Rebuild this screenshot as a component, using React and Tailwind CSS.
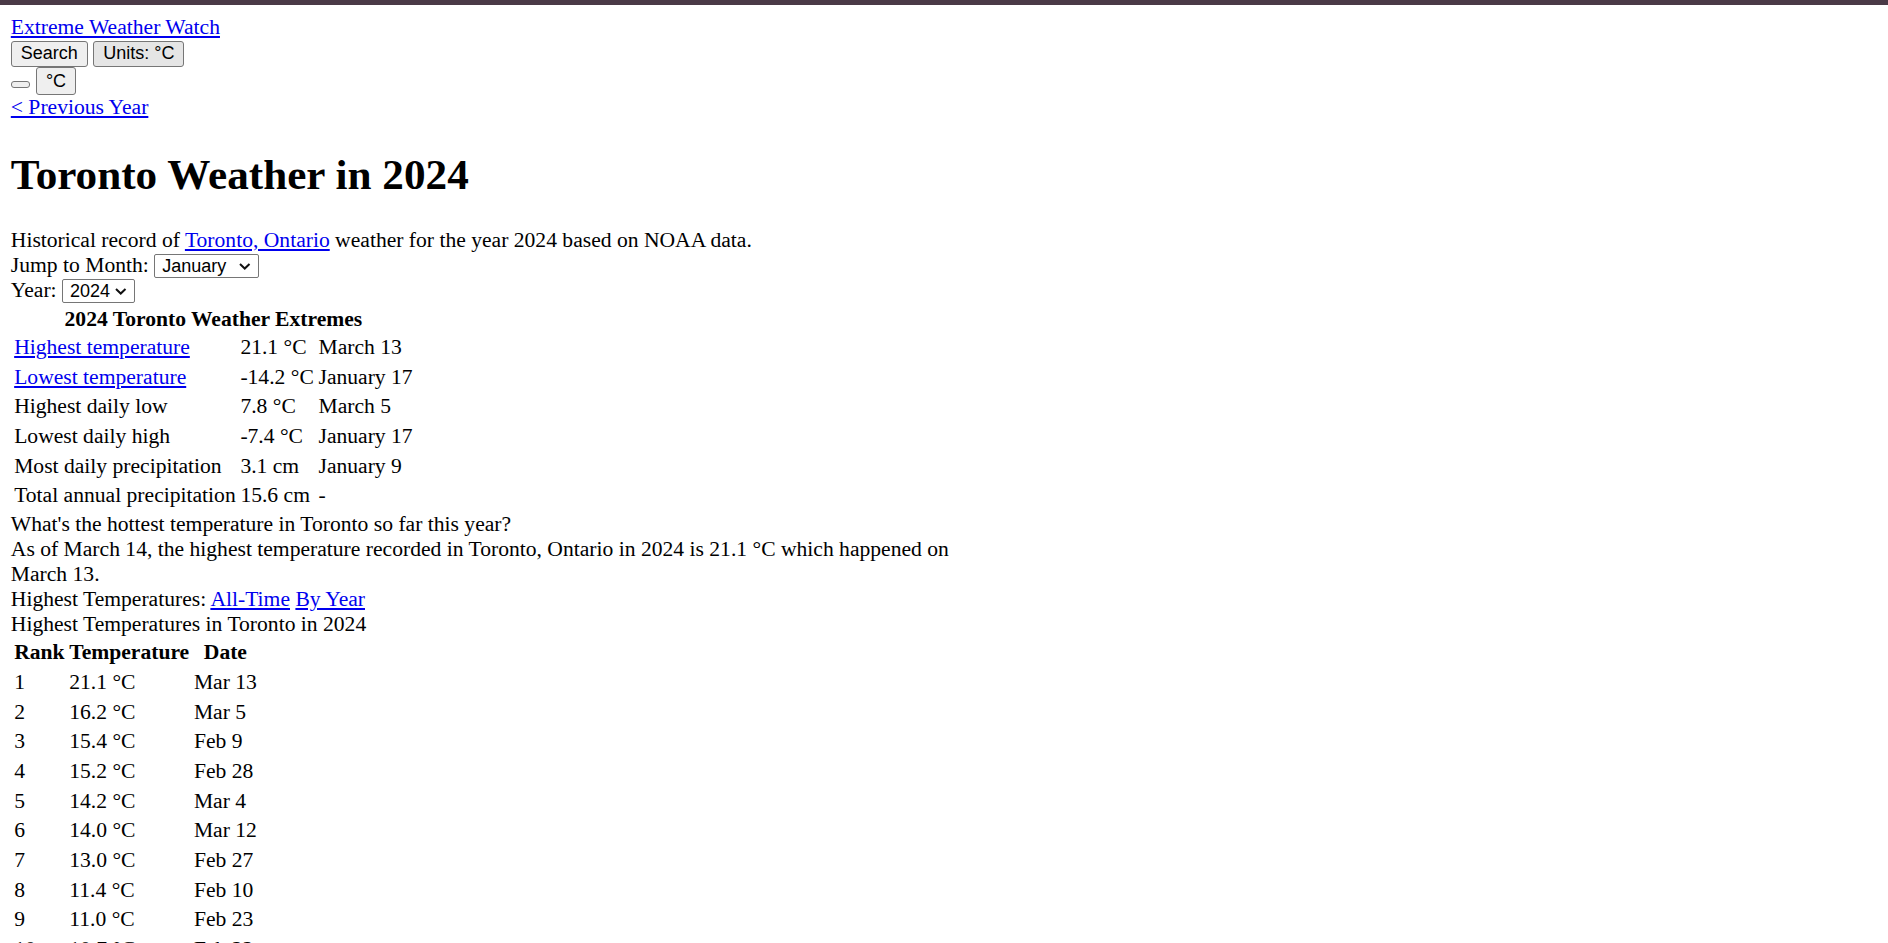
import React from "react";

const extremes = [
  { label: "Highest temperature", link: true, value: "21.1 °C", date: "March 13" },
  { label: "Lowest temperature", link: true, value: "-14.2 °C", date: "January 17" },
  { label: "Highest daily low", value: "7.8 °C", date: "March 5" },
  { label: "Lowest daily high", value: "-7.4 °C", date: "January 17" },
  { label: "Most daily precipitation", value: "3.1 cm", date: "January 9" },
  { label: "Total annual precipitation", value: "15.6 cm", date: "-" },
];

const highs = [
  ["1", "21.1 °C", "Mar 13"],
  ["2", "16.2 °C", "Mar 5"],
  ["3", "15.4 °C", "Feb 9"],
  ["4", "15.2 °C", "Feb 28"],
  ["5", "14.2 °C", "Mar 4"],
  ["6", "14.0 °C", "Mar 12"],
  ["7", "13.0 °C", "Feb 27"],
  ["8", "11.4 °C", "Feb 10"],
  ["9", "11.0 °C", "Feb 23"],
  ["10", "10.7 °C", "Feb 22"],
  ["11", "10.5 °C", "Jan 10"],
  ["12", "10.2 °C", "Feb 8"],
];

const link = "text-[#0000ee] underline";
const btn =
  "inline-block align-baseline bg-[#efefef] border border-[#767676] rounded-[3px] px-[9px] py-[1.8px] text-[18px] leading-[normal] text-black font-['Liberation_Sans',Arial,sans-serif]";

function Chevron() {
  return (
    <svg
      className="pointer-events-none absolute right-[8.5px] top-[9.5px]"
      width="11.5"
      height="7"
      viewBox="0 0 11.5 7"
      fill="none"
      stroke="#111"
      strokeWidth="2"
    >
      <path d="M1 1l4.75 4.5L10.5 1" />
    </svg>
  );
}

function Select({ width, options, value }) {
  return (
    <span className="relative inline-block align-baseline">
      <select
        defaultValue={value}
        style={{ width }}
        className="appearance-none bg-white border border-[#767676] rounded-[2px] pl-[7px] h-[23.5px] text-[18px] leading-[normal] text-black font-['Liberation_Sans',Arial,sans-serif]"
      >
        {options.map((o) => (
          <option key={o}>{o}</option>
        ))}
      </select>
      <Chevron />
    </span>
  );
}

export default function App() {
  return (
    <div className="min-h-screen bg-white text-black font-['Liberation_Serif','Times_New_Roman',serif] text-[21.6px] leading-[normal]">
      <div className="h-[4.7px] bg-[#4a3a47]" />
      <div className="mx-[10.8px] mt-[10.8px]">
        {/* header */}
        <div>
          <a href="#" className={link}>Extreme Weather Watch</a>
        </div>
        <div>
          <button className={btn}>Search</button>{" "}
          <button className={btn + " !bg-[#e5e5e5]"}>Units: °C</button>
        </div>
        <div>
          <button className="inline-block align-baseline bg-[#efefef] border border-[#767676] rounded-[3px] w-[19.7px] h-[6.4px]" />{" "}
          <button className={btn + " !py-[2.5px]"}>°C</button>
        </div>
        <div>
          <a href="#" className={link}>&lt; Previous Year</a>
        </div>

        <h1 className="text-[43.2px] font-bold leading-[normal] mt-[29.9px] mb-[28.9px]">
          Toronto Weather in 2024
        </h1>

        <div>
          Historical record of <a href="#" className={link}>Toronto, Ontario</a> weather for the year 2024 based on NOAA data.
        </div>
        <div>
          Jump to Month:{" "}
          <Select width="105.3px" value="January" options={["January", "February", "March"]} />
        </div>
        <div>
          Year: <Select width="73.4px" value="2024" options={["2024", "2023", "2022"]} />
        </div>

        {/* extremes */}
        <table className="mt-[3.6px] border-separate border-spacing-[2.7px]">
          <caption className="font-bold text-center">2024 Toronto Weather Extremes</caption>
          <tbody>
            {extremes.map((r) => (
              <tr key={r.label}>
                <td className="p-[1.35px]">
                  {r.link ? <a href="#" className={link}>{r.label}</a> : r.label}
                </td>
                <td className="p-[1.35px]">{r.value}</td>
                <td className="p-[1.35px]">{r.date}</td>
              </tr>
            ))}
          </tbody>
        </table>

        <div>What's the hottest temperature in Toronto so far this year?</div>
        <div className="max-w-[960px]">
          As of March 14, the highest temperature recorded in Toronto, Ontario in 2024 is 21.1 °C which happened on March 13.
        </div>
        <div>
          Highest Temperatures: <a href="#" className={link}>All-Time</a>{" "}
          <a href="#" className={link}>By Year</a>
        </div>
        <div>Highest Temperatures in Toronto in 2024</div>

        <table className="border-separate border-spacing-[2.7px]">
          <thead>
            <tr>
              <th className="p-[1.35px] font-bold text-center">Rank</th>
              <th className="p-[1.35px] font-bold text-center">Temperature</th>
              <th className="p-[1.35px] font-bold text-center">Date</th>
            </tr>
          </thead>
          <tbody>
            {highs.map(([rank, t, d]) => (
              <tr key={rank}>
                <td className="p-[1.35px]">{rank}</td>
                <td className="p-[1.35px]">{t}</td>
                <td className="p-[1.35px]">{d}</td>
              </tr>
            ))}
          </tbody>
        </table>
      </div>
    </div>
  );
}
